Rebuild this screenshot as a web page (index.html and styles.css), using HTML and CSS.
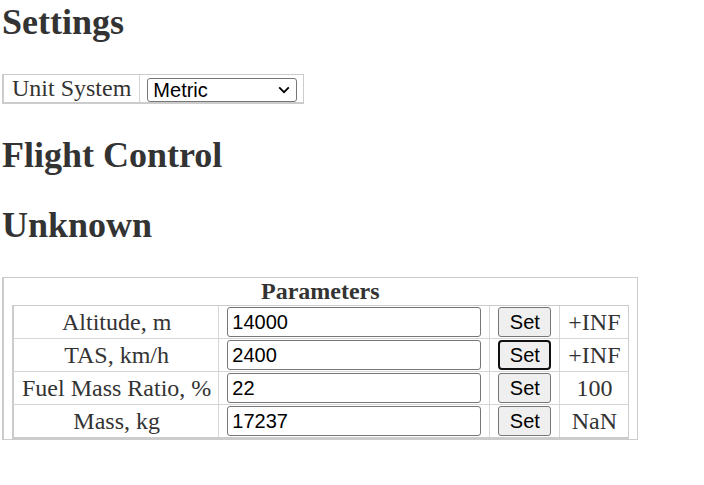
FILE: index.html
```html
<!DOCTYPE html>
<html lang="en">
<head>
<meta charset="utf-8">
<title>Settings</title>
<link rel="stylesheet" href="styles.css">
</head>
<body>
<main class="page">
  <h1 class="title">Settings</h1>
  <table class="grid settings">
    <tr>
      <td class="label-cell">Unit System</td>
      <td class="select-cell">
        <span class="select-wrap">
          <select class="unit-select">
            <option>Metric</option>
            <option>Imperial</option>
          </select>
          <svg class="chevron" width="12" height="8" viewBox="0 0 12 8" aria-hidden="true"><path d="M1.2 1.4 L6 6.2 L10.8 1.4" fill="none" stroke="#000" stroke-width="1.8"/></svg>
        </span>
      </td>
    </tr>
  </table>
  <h1 class="title">Flight Control</h1>
  <h1 class="title">Unknown</h1>
  <div class="panel">
    <div class="panel-head">Parameters</div>
    <table class="grid params">
      <tr>
        <td class="name">Altitude, m</td>
        <td class="field"><input class="value-input" type="text" value="14000"></td>
        <td class="action"><button class="set-btn" type="button">Set</button></td>
        <td class="limit">+INF</td>
      </tr>
      <tr>
        <td class="name">TAS, km/h</td>
        <td class="field"><input class="value-input" type="text" value="2400"></td>
        <td class="action"><button class="set-btn is-focused" type="button">Set</button></td>
        <td class="limit">+INF</td>
      </tr>
      <tr>
        <td class="name">Fuel Mass Ratio, %</td>
        <td class="field"><input class="value-input" type="text" value="22"></td>
        <td class="action"><button class="set-btn" type="button">Set</button></td>
        <td class="limit">100</td>
      </tr>
      <tr>
        <td class="name">Mass, kg</td>
        <td class="field"><input class="value-input" type="text" value="17237"></td>
        <td class="action"><button class="set-btn" type="button">Set</button></td>
        <td class="limit">NaN</td>
      </tr>
    </table>
  </div>
</main>
</body>
</html>
```
FILE: styles.css
```css
html, body {
  margin: 0;
  padding: 0;
  background: #ffffff;
}

body {
  font-family: "Liberation Serif", "Times New Roman", serif;
  font-size: 24px;
  color: #333333;
}

.page {
  padding: 2px 2px;
  display: flex;
  flex-direction: column;
  align-items: flex-start;
}

.title {
  margin: 0;
  font-size: 36px;
  font-weight: bold;
  line-height: 40px;
  color: #333333;
}

.grid {
  border-collapse: separate;
  border-spacing: 0;
  border-style: solid;
  border-color: #cccccc;
  border-width: 1px 1px 2px 2px;
}

.grid td {
  padding: 0 8px;
  border-color: #d6d6d6;
  border-style: solid;
  border-width: 0;
  white-space: nowrap;
}

.grid td + td {
  border-left-width: 1px;
}

.grid tr + tr td {
  border-top-width: 1px;
}

/* Settings table */
.settings {
  margin-top: 32px;
  margin-bottom: 31px;
}

.settings td {
  height: 27px;
  line-height: 27px;
  vertical-align: middle;
}

.settings .select-cell {
  padding: 0 6px 0 7px;
}

.select-wrap {
  position: relative;
  display: inline-block;
  vertical-align: middle;
  line-height: 0;
}

.unit-select {
  appearance: none;
  -webkit-appearance: none;
  width: 150px;
  height: 24px;
  box-sizing: border-box;
  margin: 0;
  padding: 0 24px 0 5px;
  font-family: "Liberation Sans", Arial, sans-serif;
  font-size: 20px;
  line-height: 22px;
  color: #000000;
  background: #ffffff;
  border: 1px solid #767676;
  border-radius: 3px;
}

.chevron {
  position: absolute;
  right: 7px;
  top: 8px;
  pointer-events: none;
}

/* Flight control / Unknown spacing */
.title + .title {
  margin-top: 30px;
}

/* Parameters panel */
.panel {
  margin-top: 32px;
  border-style: solid;
  border-color: #cccccc;
  border-width: 1px 1px 1px 2px;
  padding: 0 8px 0 8px;
}

.panel-head {
  font-weight: bold;
  font-size: 24px;
  line-height: 27px;
  text-align: center;
}

.params td {
  padding: 1px 8px;
  height: 30px;
  line-height: 27px;
  text-align: center;
  vertical-align: middle;
}

.params .name {
  padding-right: 7px;
}

.params .limit {
  padding: 1px 7px 1px 8px;
}

.params .field,
.params .action {
  line-height: 0;
}

.value-input {
  display: block;
  width: 254px;
  height: 30px;
  box-sizing: border-box;
  margin: 0;
  padding: 1px 4px;
  font-family: "Liberation Sans", Arial, sans-serif;
  font-size: 20px;
  color: #000000;
  background: #ffffff;
  border: 1px solid #767676;
  border-radius: 3px;
}

.set-btn {
  display: block;
  width: 53px;
  height: 30px;
  box-sizing: border-box;
  margin: 0;
  padding: 0 9px;
  font-family: "Liberation Sans", Arial, sans-serif;
  font-size: 20px;
  color: #000000;
  background: #efefef;
  border: 1px solid #767676;
  border-radius: 3px;
}

.set-btn.is-focused {
  border: 2px solid #101010;
  border-radius: 4px;
}
```
